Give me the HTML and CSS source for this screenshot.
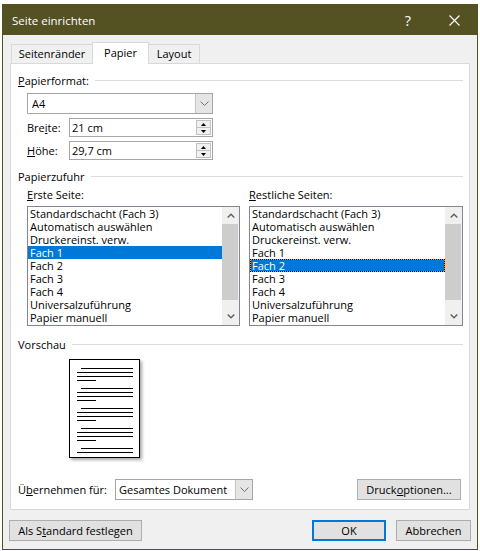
FILE: index.html
```html
<!DOCTYPE html>
<html lang="de">
<head>
<meta charset="utf-8">
<title>Seite einrichten</title>
<link rel="stylesheet" href="styles.css">
</head>
<body>
<div class="window">
  <div class="titlebar">
    <span class="title">Seite einrichten</span>
    <span class="tbtn help">?</span>
    <span class="tbtn close"><svg width="11" height="11" viewBox="0 0 11 11"><path d="M0.5 0.5 L10.5 10.5 M10.5 0.5 L0.5 10.5" stroke="#fff" stroke-width="1.1" fill="none"/></svg></span>
  </div>
  <div class="client">
    <div class="tabs">
      <div class="tab t1">Seitenränder</div>
      <div class="tab t2 active">Papier</div>
      <div class="tab t3">Layout</div>
    </div>
    <div class="panel">
      <div class="gh first"><span><u>P</u>apierformat:</span><i class="rule"></i></div>
      <div class="indent">
        <div class="combo a4"><span class="val">A4</span><span class="dd"><svg width="9" height="5" viewBox="0 0 9 5"><path d="M0.5 0.5 L4.5 4.5 L8.5 0.5" stroke="#707070" fill="none"/></svg></span></div>
        <div class="frow">
          <span class="flabel">Bre<u>i</u>te:</span>
          <div class="spin"><span class="val">21 cm</span><span class="spinbtns"><b class="sbtn"><svg width="5" height="3" viewBox="0 0 5 3"><path d="M0 3 L2.5 0 L5 3 Z" fill="#000"/></svg></b><b class="sbtn"><svg width="5" height="3" viewBox="0 0 5 3"><path d="M0 0 L2.5 3 L5 0 Z" fill="#000"/></svg></b></span></div>
        </div>
        <div class="frow">
          <span class="flabel"><u>H</u>öhe:</span>
          <div class="spin"><span class="val">29,7 cm</span><span class="spinbtns"><b class="sbtn"><svg width="5" height="3" viewBox="0 0 5 3"><path d="M0 3 L2.5 0 L5 3 Z" fill="#000"/></svg></b><b class="sbtn"><svg width="5" height="3" viewBox="0 0 5 3"><path d="M0 0 L2.5 3 L5 0 Z" fill="#000"/></svg></b></span></div>
        </div>
      </div>

      <div class="gh second"><span>Papierzufuhr</span><i class="rule"></i></div>
      <div class="cols">
        <div class="col left">
          <div class="clabel"><u>E</u>rste Seite:</div>
          <div class="list">
            <div class="items">
              <div class="item">Standardschacht (Fach 3)</div>
              <div class="item">Automatisch auswählen</div>
              <div class="item">Druckereinst. verw.</div>
              <div class="item sel">Fach 1</div>
              <div class="item">Fach 2</div>
              <div class="item">Fach 3</div>
              <div class="item">Fach 4</div>
              <div class="item">Universalzuführung</div>
              <div class="item">Papier manuell</div>
            </div>
            <div class="sb">
              <span class="arr"><svg width="8" height="5" viewBox="0 0 8 5"><path d="M0.7 4.5 L4 1.2 L7.3 4.5" stroke="#606060" stroke-width="1.4" fill="none"/></svg></span>
              <span class="thumb"></span>
              <span class="track"></span>
              <span class="arr"><svg width="8" height="5" viewBox="0 0 8 5"><path d="M0.7 0.5 L4 3.8 L7.3 0.5" stroke="#606060" stroke-width="1.4" fill="none"/></svg></span>
            </div>
          </div>
        </div>
        <div class="col right">
          <div class="clabel"><u>R</u>estliche Seiten:</div>
          <div class="list">
            <div class="items">
              <div class="item">Standardschacht (Fach 3)</div>
              <div class="item">Automatisch auswählen</div>
              <div class="item">Druckereinst. verw.</div>
              <div class="item">Fach 1</div>
              <div class="item sel focus">Fach 2</div>
              <div class="item">Fach 3</div>
              <div class="item">Fach 4</div>
              <div class="item">Universalzuführung</div>
              <div class="item">Papier manuell</div>
            </div>
            <div class="sb">
              <span class="arr"><svg width="8" height="5" viewBox="0 0 8 5"><path d="M0.7 4.5 L4 1.2 L7.3 4.5" stroke="#606060" stroke-width="1.4" fill="none"/></svg></span>
              <span class="thumb"></span>
              <span class="track"></span>
              <span class="arr"><svg width="8" height="5" viewBox="0 0 8 5"><path d="M0.7 0.5 L4 3.8 L7.3 0.5" stroke="#606060" stroke-width="1.4" fill="none"/></svg></span>
            </div>
          </div>
        </div>
      </div>

      <div class="gh third"><span>Vorschau</span><i class="rule"></i></div>
      <div class="preview">
        <svg width="71" height="99" viewBox="0 0 71 99" shape-rendering="crispEdges">
          <rect x="0.5" y="0.5" width="70" height="98" fill="#fff" stroke="#000"/>
          <g fill="#000">
            <rect x="12" y="9" width="52" height="1"/><rect x="8" y="13" width="56" height="1"/><rect x="8" y="17" width="56" height="1"/><rect x="8" y="21" width="19" height="1"/>
            <rect x="12" y="29" width="52" height="1"/><rect x="8" y="33" width="56" height="1"/><rect x="8" y="37" width="56" height="1"/><rect x="8" y="41" width="19" height="1"/>
            <rect x="12" y="49" width="52" height="1"/><rect x="8" y="53" width="56" height="1"/><rect x="8" y="57" width="56" height="1"/><rect x="8" y="61" width="19" height="1"/>
            <rect x="12" y="69" width="52" height="1"/><rect x="8" y="73" width="56" height="1"/><rect x="8" y="77" width="56" height="1"/><rect x="8" y="81" width="19" height="1"/>
            <rect x="12" y="89" width="52" height="1"/><rect x="8" y="93" width="56" height="1"/>
          </g>
        </svg>
      </div>

      <div class="applyrow">
        <span class="alabel">Ü<u>b</u>ernehmen für:</span>
        <div class="combo apply"><span class="val">Gesamtes Dokument</span><span class="dd"><svg width="9" height="5" viewBox="0 0 9 5"><path d="M0.5 0.5 L4.5 4.5 L8.5 0.5" stroke="#707070" fill="none"/></svg></span></div>
        <button class="btn druck">Druck<u>o</u>ptionen...</button>
      </div>
    </div>
    <div class="bottom">
      <button class="btn std">Als S<u>t</u>andard festlegen</button>
      <button class="btn ok">OK</button>
      <button class="btn cancel">Abbrechen</button>
    </div>
  </div>
</div>
</body>
</html>
```
FILE: styles.css
```css
* { box-sizing: border-box; }
html, body { margin: 0; padding: 0; }
body {
  background: #ffffff;
  font-family: "Open Sans", "Noto Sans", sans-serif;
  font-size: 11px;
  color: #000;
}
u { text-decoration: underline; text-underline-offset: 1px; text-decoration-thickness: 1px; }

.window {
  margin: 4px 0 0 2px;
  width: 476px;
  height: 546px;
  border: 1px solid #545123;
  background: #f0f0f0;
  display: flex;
  flex-direction: column;
}
.titlebar {
  height: 30px;
  flex: none;
  background: #545123;
  color: #fff;
  display: flex;
  align-items: center;
}
.title { flex: 1; padding-left: 9px; font-size: 11.5px; }
.tbtn { width: 46px; height: 30px; display: flex; align-items: center; justify-content: center; }
.help { font-size: 14.5px; }

.client {
  flex: 1;
  display: flex;
  flex-direction: column;
  padding: 7px 6px 0 7px;
}
.tabs { height: 21px; display: flex; align-items: flex-end; padding-left: 1px; }
.tab {
  height: 19px;
  line-height: 18px;
  border: 1px solid #d9d9d9;
  border-bottom: 0;
  background: #f0f0f0;
  text-align: center;
}
.tab.t1 { width: 82px; }
.tab.t2 { width: 57px; margin-left: -1px; }
.tab.t3 { width: 52px; margin-left: -1px; }
.tab.active {
  height: 22px;
  line-height: 20px;
  margin-bottom: -1px;
  background: #fff;
  position: relative;
  z-index: 1;
}

.panel {
  width: 460px;
  height: 447px;
  flex: none;
  border: 1px solid #d9d9d9;
  background: #fff;
  padding: 0 6px 0 7px;
  display: flex;
  flex-direction: column;
}
.gh { display: flex; align-items: center; gap: 6px; height: 16px; }
.gh .rule { flex: 1; height: 1px; background: #dcdcdc; }
.gh.first { margin-top: 8px; }
.gh.second { margin-top: 8px; }
.gh.third { margin-top: 10px; }
.indent { padding-left: 9px; }

.combo {
  display: flex;
  height: 21px;
  border: 1px solid #a6a6a6;
  background: #fff;
}
.combo .val { flex: 1; padding-left: 4px; line-height: 19px; }
.combo .dd {
  width: 17px;
  background: #e5e5e5;
  border-left: 1px solid #c4c4c4;
  display: flex;
  align-items: center;
  justify-content: center;
}
.combo.a4 { width: 186px; margin-top: 5px; }

.frow { display: flex; align-items: center; height: 19px; margin-top: 4px; }
.flabel { width: 42px; }
.spin {
  width: 144px;
  height: 19px;
  border: 1px solid #a6a6a6;
  display: flex;
}
.spin .val { flex: 1; padding-left: 2px; line-height: 17px; }
.spinbtns { width: 16px; display: flex; flex-direction: column; padding: 1px 1px 1px 0; }
.sbtn {
  flex: 1;
  background: #f0f0f0;
  border: 1px solid #c2c2c2;
  display: flex;
  align-items: center;
  justify-content: center;
}
.sbtn + .sbtn { border-top: 0; }

.cols { display: flex; gap: 9px; padding-left: 9px; }
.col.left { width: 213px; }
.col.right { width: 214px; }
.clabel { height: 16px; line-height: 16px; margin-top: 3px; }
.list {
  margin-top: 3px;
  height: 120px;
  border: 1px solid #828790;
  background: #fff;
  display: flex;
}
.items { flex: 1; min-width: 0; }
.item { height: 13px; line-height: 13px; padding-left: 2px; white-space: nowrap; }
.item.sel { background: #0078d7; color: #fff; }
.item.focus { border: 1px solid #ff8728; outline: 1px dotted #000; outline-offset: -1px; padding-left: 1px; line-height: 11px; }
.sb { width: 17px; flex: none; background: #f0f0f0; display: flex; flex-direction: column; }
.sb .arr { height: 17px; flex: none; display: flex; align-items: center; justify-content: center; }
.sb .thumb { height: 76px; flex: none; background: #cdcdcd; margin: 0 1px 0 0; }
.sb .track { flex: 1; }

.preview { margin: 7px 0 0 51px; height: 99px; width: 71px; box-shadow: 2px 2px 3px rgba(0,0,0,0.35); }
.preview svg { display: block; }

.applyrow { display: flex; align-items: center; margin-top: 21px; height: 21px; }
.alabel { width: 97px; }
.combo.apply { width: 138px; }
.combo.apply .val { padding-left: 3px; }

.btn {
  font: inherit;
  color: #000;
  background: #e1e1e1;
  border: 1px solid #adadad;
  height: 21px;
  padding: 0;
  text-align: center;
}
.btn.druck { width: 104px; margin-left: auto; margin-right: 2px; }
.bottom { display: flex; margin: 10px 0 0 -1px; height: 21px; }
.btn.std { width: 133px; }
.btn.ok { width: 74px; margin-left: auto; border: 2px solid #0078d7; }
.btn.cancel { width: 75px; margin-left: 10px; }
```
